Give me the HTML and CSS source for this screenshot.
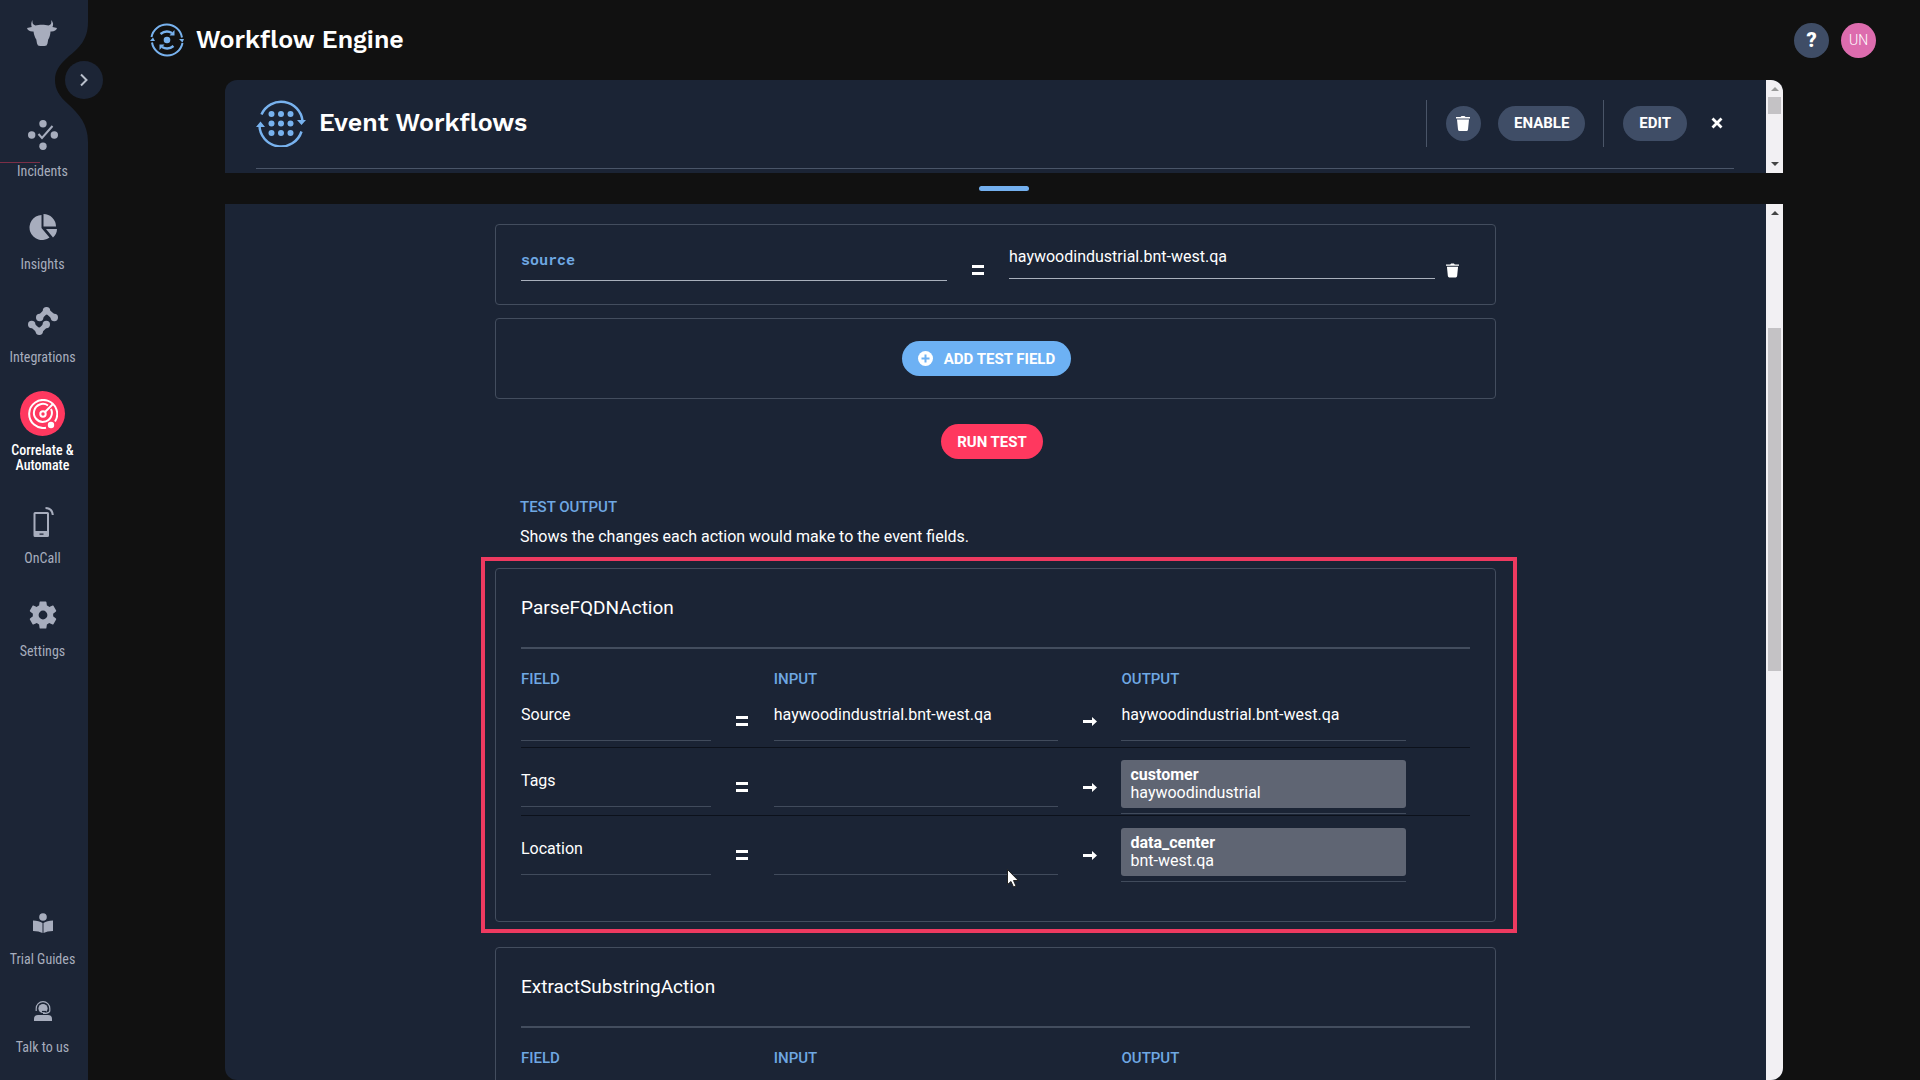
FILE: index.html
```html
<!DOCTYPE html>
<html lang="en">
<head>
<meta charset="utf-8">
<title>Workflow Engine</title>
<link rel="stylesheet" href="styles.css">
</head>
<body>
<div class="app">
  <nav class="sidebar" aria-label="Main">
    <svg class="sidebar-notch" width="33" height="120" viewBox="0 0 33 120" aria-hidden="true"><path fill="#111" d="M33 0C33 18 24 26 13 35C4 43 0 49 0 58C0 67 4 74 13 82C24 92 33 102 33 120Z"/></svg>
    <button class="expand" type="button" aria-label="Expand menu"><svg width="8" height="14" viewBox="0 0 8 14"><path d="M1 1.500l5.500 5.500L1 12.500" fill="none" stroke="#b9c0cc" stroke-width="2"/></svg></button>
    <svg class="logo" width="30" height="26" viewBox="0 0 30 26" aria-hidden="true"><path fill="#a7adbd" d="M5.500 0C5 3 6 5 8.500 5.500C12 4.500 18 4.500 21.500 5.500C24 5 25 3 24 0C26.500 2 26.500 5 25.500 7L30 8C29.500 10.500 26.500 12 23.500 11.500C23.300 15 22.500 17.500 21.200 19.500L20.500 23.500Q20 26 17.500 26H13Q10.500 26 10 23.500L9.300 19.500C8 17.500 7 15 6.500 11.500C3.500 12 .5 10.500 0 8L4.700 7C4 5 4 2 5.500 0Z"/></svg>
    <ul class="nav-list">
      <li><a class="nav-item" href="#incidents"><span class="nav-icon"><svg width="30" height="30" viewBox="0 0 30 30"><g fill="#a7adbd"><circle cx="15" cy="3.700" r="3.700"/><circle cx="15" cy="26.300" r="3.700"/><circle cx="3.700" cy="15" r="3.700"/><circle cx="26.300" cy="15" r="3.700"/></g><path d="M10.500 14l3.500 4L24.500 6" fill="none" stroke="#a7adbd" stroke-width="2"/></svg></span><span>Incidents</span></a></li>
      <li><a class="nav-item" href="#insights"><span class="nav-icon"><svg width="28" height="27" viewBox="0 0 28 27"><path fill="#a7adbd" d="M12.500 1V14L20.500 23.500A12.500 12.500 0 1 1 12.500 1ZM14.500 0A12.500 12.500 0 0 1 27 12.500H14.500ZM17 15H28C28 18.500 26.500 21.500 24 23.500Z"/></svg></span><span>Insights</span></a></li>
      <li><a class="nav-item" href="#integrations"><span class="nav-icon"><svg width="30" height="28" viewBox="0 0 30 28"><path d="M3.700 17.500L11.300 24.500L18.300 17.500M11.700 10.500L18.500 3.700L26.300 10.500" fill="none" stroke="#a7adbd" stroke-width="5"/><g fill="#a7adbd"><circle cx="3.700" cy="17.500" r="3.700"/><circle cx="11.300" cy="24.300" r="3.700"/><circle cx="18.300" cy="17.500" r="3.700"/><circle cx="11.700" cy="10.500" r="3.700"/><circle cx="18.500" cy="3.700" r="3.700"/><circle cx="26.300" cy="10.500" r="3.700"/></g></svg></span><span>Integrations</span></a></li>
      <li><a class="nav-item nav-item-active" href="#correlate" aria-current="page"><span class="nav-icon"><svg width="30" height="30" viewBox="0 0 30 30"><g fill="none" stroke="#fff" stroke-width="2"><path d="M18 28.700A14 14 0 1 1 27 22.500"/><path d="M20 6.500A9 9 0 1 0 23 10"/><circle cx="15" cy="15" r="2.700"/><path d="M17 13l8-8"/></g><circle cx="23" cy="26" r="3.200" fill="#fff"/></svg></span><span>Correlate &amp;<br>Automate</span></a></li>
      <li><a class="nav-item" href="#oncall"><span class="nav-icon"><svg width="26" height="30" viewBox="0 0 26 30"><path fill="#a7adbd" fill-rule="evenodd" d="M5 5H17.500Q19 5 19 6.500V28.500Q19 30 17.500 30H5Q3.500 30 3.500 28.500V6.500Q3.500 5 5 5ZM5.500 7V24H17V7ZM9.500 26.500V27.800H13.500V26.500Z"/><path d="M15.500 1Q22 1 22.800 8" fill="none" stroke="#a7adbd" stroke-width="2"/></svg></span><span>OnCall</span></a></li>
      <li><a class="nav-item" href="#settings"><span class="nav-icon"><svg width="34" height="34" viewBox="0 0 24 24"><path fill="#a7adbd" d="M19.140 12.940c.04-.3.060-.610.060-.940 0-.320-.020-.640-.070-.940l2.030-1.580c.180-.140.230-.410.120-.610l-1.920-3.320c-.120-.220-.370-.290-.590-.220l-2.390.960c-.5-.380-1.030-.7-1.620-.940l-.360-2.540c-.040-.240-.240-.410-.480-.410h-3.840c-.240 0-.430.170-.470.410l-.360 2.540c-.590.240-1.130.570-1.620.940l-2.390-.960c-.220-.080-.470 0-.590.220L2.740 8.870c-.120.210-.080.470.120.610l2.030 1.580c-.050.3-.090.630-.090.940s.020.640.070.940l-2.030 1.580c-.180.140-.230.410-.120.610l1.920 3.320c.120.220.370.290.590.220l2.390-.960c.5.380 1.030.7 1.620.940l.36 2.540c.050.240.240.410.480.410h3.840c.240 0 .440-.170.470-.410l.36-2.540c.590-.240 1.130-.560 1.620-.940l2.390.960c.220.080.470 0 .590-.220l1.920-3.320c.120-.220.070-.470-.120-.610l-2.010-1.580zM12 15.100A3.100 3.100 0 1 1 12 8.900a3.100 3.100 0 0 1 0 6.200z"/></svg></span><span>Settings</span></a></li>
    </ul>
    <ul class="nav-list nav-list-bottom">
      <li><a class="nav-item" href="#guides"><span class="nav-icon"><svg width="20" height="20" viewBox="0 0 20 20"><g fill="#a7adbd"><circle cx="10" cy="4" r="3.800"/><path d="M0 7.500Q6 7.500 9.500 10V20Q6 18 0 18ZM20 7.500Q14 7.500 10.500 10V20Q14 18 20 18Z"/></g></svg></span><span>Trial Guides</span></a></li>
      <li><a class="nav-item" href="#talk"><span class="nav-icon"><svg width="18" height="20" viewBox="0 0 18 20"><path fill="#a7adbd" d="M0 20V18Q0 14 4 14H14Q18 14 18 18V20Z"/><circle cx="9" cy="7.500" r="4.600" fill="#a7adbd"/><path d="M2.200 10V7.500A6.800 6.800 0 0 1 15.800 7.500V10Q15 12.500 9 12.500" fill="none" stroke="#a7adbd" stroke-width="1.200"/><path d="M8 10.500h4" stroke="#1c2536" stroke-width="1.200"/></svg></span><span>Talk to us</span></a></li>
    </ul>
    <span class="marker" aria-hidden="true"></span>
  </nav>

  <main class="main">
    <header class="topbar">
      <svg width="34" height="34" viewBox="0 0 34 34" aria-hidden="true"><g fill="none" stroke="#78b2ee" stroke-width="2"><path d="M1.500 14A15.500 15.500 0 0 1 32 14.500"/><path d="M32.500 20A15.500 15.500 0 0 1 2 19.500"/><path d="M10.500 11Q16 6.500 22 10" stroke-width="2.500"/><path d="M23.500 23Q18 27.500 12 24" stroke-width="2.500"/></g><g fill="#78b2ee"><circle cx="17" cy="17" r="3.300"/><path d="M29 16h5l-1.500 3.500ZM0 18h5L3 14.500ZM24.500 7v5.500h-5ZM9.500 27v-5.500h5Z"/></g></svg>
      <h1 class="title">Workflow Engine</h1>
      <button class="round-btn" type="button" aria-label="Help">?</button>
      <button class="round-btn avatar" type="button">UN</button>
    </header>

    <div class="panels">
      <section class="panel panel-head">
        <div class="head-body">
          <div class="head-row">
            <svg width="50" height="48" viewBox="0 0 50 48" aria-hidden="true"><g fill="none" stroke="#78b2ee" stroke-width="2.500"><path d="M5.500 15.500A21.500 21.500 0 0 1 46.500 22"/><path d="M3.500 26A21.500 21.500 0 0 0 45.500 32.500"/></g><g fill="#78b2ee"><path d="M41 21h9L45.500 26ZM0 28h9L4.500 22.500Z"/><circle cx="15.500" cy="15" r="3"/><circle cx="25" cy="15" r="3"/><circle cx="34.500" cy="15" r="3"/><circle cx="15.500" cy="24.500" r="3"/><circle cx="25" cy="24.500" r="3"/><circle cx="34.500" cy="24.500" r="3"/><circle cx="15.500" cy="34" r="3"/><circle cx="25" cy="34" r="3"/><circle cx="34.500" cy="34" r="3"/></g></svg>
            <h2 class="title">Event Workflows</h2>
            <div class="actions">
              <button class="round-btn" type="button" aria-label="Delete workflow"><svg width="14" height="15" viewBox="0 0 14 15"><path fill="#fff" d="M0 1H4.500L5.500 0H8.500L9.500 1H14V2.500H0ZM1 3.500H13L12 13.500Q11.800 15 10.500 15H3.500Q2.200 15 2 13.500Z"/></svg></button>
              <button class="pill" type="button">ENABLE</button>
            </div>
            <div class="actions">
              <button class="pill" type="button">EDIT</button>
              <button class="close" type="button" aria-label="Close"><svg width="12" height="12" viewBox="0 0 12 12"><path d="M1.500 1.500l9 9M10.500 1.500l-9 9" stroke="#fff" stroke-width="2.800"/></svg></button>
            </div>
          </div>
        </div>
        <div class="scrollbar" aria-hidden="true"><span class="arrow-up arrow-off"></span><span class="thumb thumb-short"></span><span class="arrow-down"></span></div>
      </section>

      <div class="splitter"><span></span></div>

      <section class="panel panel-body">
        <div class="scroll-area">
          <div class="content">
            <div class="card field-card">
              <input class="line-input field-name" type="text" value="source" aria-label="Field name">
              <svg class="equals" width="12" height="10" viewBox="0 0 12 10" aria-label="equals"><path fill="#fff" d="M0 0h12v3H0zM0 7h12v3H0z"/></svg>
              <input class="line-input field-value" type="text" value="haywoodindustrial.bnt-west.qa" aria-label="Field value">
              <button class="icon-btn" type="button" aria-label="Delete field"><svg width="13" height="15" viewBox="0 0 14 15"><path fill="#fff" d="M0 1H4.500L5.500 0H8.500L9.500 1H14V2.500H0ZM1 3.500H13L12 13.500Q11.800 15 10.500 15H3.500Q2.200 15 2 13.500Z"/></svg></button>
            </div>
            <div class="card add-card">
              <button class="pill pill-blue" type="button"><svg width="15" height="15" viewBox="0 0 15 15"><circle cx="7.500" cy="7.500" r="7.500" fill="#fff"/><path d="M7.500 3.500v8M3.500 7.500h8" stroke="#6db1f4" stroke-width="2"/></svg>ADD TEST FIELD</button>
            </div>
            <div class="run-row"><button class="pill pill-red" type="button">RUN TEST</button></div>
            <div class="intro">
              <h3 class="label">TEST OUTPUT</h3>
              <p>Shows the changes each action would make to the event fields.</p>
            </div>

            <section class="card result-card framed">
              <h3 class="result-title">ParseFQDNAction</h3>
              <table class="result">
                <colgroup><col class="c-field"><col class="c-op"><col class="c-value"><col class="c-op"><col class="c-value"><col></colgroup>
                <thead><tr><th class="label">FIELD</th><th></th><th class="label">INPUT</th><th></th><th class="label">OUTPUT</th><th></th></tr></thead>
                <tbody>
                  <tr><td><div class="line">Source</div></td><td class="op"><svg width="12" height="10" viewBox="0 0 12 10"><path fill="#fff" d="M0 0h12v3H0zM0 7h12v3H0z"/></svg></td><td><div class="line">haywoodindustrial.bnt-west.qa</div></td><td class="op"><svg width="14" height="10" viewBox="0 0 14 10"><path fill="#fff" d="M0 4h9V1l5 4.500-5 4.500V7H0z"/></svg></td><td><div class="line">haywoodindustrial.bnt-west.qa</div></td><td></td></tr>
                  <tr><td><div class="line">Tags</div></td><td class="op"><svg width="12" height="10" viewBox="0 0 12 10"><path fill="#fff" d="M0 0h12v3H0zM0 7h12v3H0z"/></svg></td><td><div class="line"></div></td><td class="op"><svg width="14" height="10" viewBox="0 0 14 10"><path fill="#fff" d="M0 4h9V1l5 4.500-5 4.500V7H0z"/></svg></td><td><div class="chip-line"><div class="chip"><b>customer</b><br>haywoodindustrial</div></div></td><td></td></tr>
                  <tr><td><div class="line">Location</div></td><td class="op"><svg width="12" height="10" viewBox="0 0 12 10"><path fill="#fff" d="M0 0h12v3H0zM0 7h12v3H0z"/></svg></td><td><div class="line"></div></td><td class="op"><svg width="14" height="10" viewBox="0 0 14 10"><path fill="#fff" d="M0 4h9V1l5 4.500-5 4.500V7H0z"/></svg></td><td><div class="chip-line"><div class="chip"><b>data_center</b><br>bnt-west.qa</div></div></td><td></td></tr>
                </tbody>
              </table>
              <svg class="cursor" width="12" height="19" viewBox="0 0 12 19" aria-hidden="true"><path fill="#fff" stroke="#222" stroke-width="1" d="M.5.5V15.500L4 12.500L6.500 18L9 17L6.500 11.500H11.300Z"/></svg>
            </section>

            <section class="card result-card">
              <h3 class="result-title">ExtractSubstringAction</h3>
              <table class="result">
                <colgroup><col class="c-field"><col class="c-op"><col class="c-value"><col class="c-op"><col class="c-value"><col></colgroup>
                <thead><tr><th class="label">FIELD</th><th></th><th class="label">INPUT</th><th></th><th class="label">OUTPUT</th><th></th></tr></thead>
              </table>
            </section>
          </div>
        </div>
        <div class="scrollbar" aria-hidden="true"><span class="arrow-up"></span><span class="thumb thumb-long"></span></div>
      </section>
    </div>
  </main>
</div>
</body>
</html>
```
FILE: styles.css
```css
* { box-sizing: border-box; }

body {
  margin: 0;
  background: #111;
  color: #fff;
  font-family: Roboto, "Liberation Sans", sans-serif;
  font-size: 16px;
  font-weight: 400;
  line-height: 20px;
}

h1, h2, h3, p, ul { margin: 0; padding: 0; }
ul { list-style: none; }
svg { display: block; flex: none; }
button { border: 0; padding: 0; color: inherit; font: inherit; background: none; cursor: pointer; }

.app { display: flex; height: 100vh; overflow: hidden; }

/* Sidebar */
.sidebar {
  position: relative;
  z-index: 1;
  display: flex;
  flex: none;
  flex-direction: column;
  width: 88px;
  padding: 20px 0 25px;
  background: #1c2536;
}
.sidebar-notch { position: absolute; top: 22px; right: 0; }
.expand {
  position: absolute;
  top: 61px;
  right: -15px;
  display: grid;
  place-items: center;
  width: 38px;
  height: 38px;
  border-radius: 50%;
  background: #1c2536;
}
.logo { margin: 0 0 66px 27px; }
.nav-list { display: flex; flex-direction: column; gap: 27px; width: 85px; }
.nav-list-bottom { gap: 21px; margin-top: auto; }
.nav-item {
  display: flex;
  flex-direction: column;
  align-items: center;
  gap: 7px;
  color: #a7adbd;
  font-family: "Roboto Condensed", "Liberation Sans Narrow", Roboto, sans-serif;
  font-size: 14px;
  line-height: 15px;
  text-align: center;
  text-decoration: none;
}
.nav-list:not(.nav-list-bottom) { gap: 26px; }
.nav-icon { display: grid; place-items: center; width: 45px; height: 45px; border-radius: 50%; }
.nav-item-active { color: #fff; font-weight: 500; }
.nav-item-active .nav-icon { background: #ff385f; }
.marker { position: absolute; top: 162px; left: 0; width: 40px; height: 1px; background: #7c2f47; }

/* Top bar */
.main { display: flex; flex: 1; flex-direction: column; min-width: 0; }
.topbar { display: flex; align-items: center; height: 80px; padding: 0 44px 0 62px; }
.topbar .title { margin: 0 auto 0 12px; }
.title { font-family: "Work Sans", "Open Sans", sans-serif; font-size: 25px; font-weight: 600; line-height: 32px; }
.round-btn {
  display: grid;
  place-items: center;
  width: 35px;
  height: 35px;
  border-radius: 50%;
  background: #3f4d66;
  font-size: 20px;
  font-weight: 900;
}
.avatar { margin-left: 12px; background: #dd6cae; font-size: 14px; font-weight: 300; }

/* Panels */
.panels { display: flex; flex: 1; flex-direction: column; min-height: 0; padding: 0 137px; }
.panel { display: flex; overflow: hidden; background: #1b2435; }
.panel-head { flex: none; height: 93px; border-radius: 12px 12px 0 0; }
.head-body { flex: 1; padding: 0 32px 4px 31px; }
.head-row { display: flex; align-items: center; height: 89px; padding-bottom: 2px; border-bottom: 1px solid #4a5568; }
.head-row .title { margin: 0 auto 0 13px; }
.actions { display: flex; align-items: center; gap: 17px; height: 47px; padding: 0 18px 0 19px; border-left: 1px solid #4a5568; }
.actions:last-child { gap: 24px; padding-right: 11px; }
.pill {
  display: inline-flex;
  align-items: center;
  gap: 11px;
  height: 35px;
  padding: 0 16px;
  border-radius: 18px;
  background: #3f4d66;
  font-size: 15px;
  font-weight: 700;
}
.pill-blue { background: #6db1f4; }
.pill-red { background: #ff385f; }
.splitter { display: grid; flex: none; place-items: center; height: 31px; }
.splitter span { width: 50px; height: 5px; border-radius: 3px; background: #73afee; }
.panel-body { flex: 1; min-height: 0; border-radius: 0 0 12px 12px; }
.scroll-area { flex: 1; overflow: auto; scrollbar-width: none; }
.content { width: 100%; max-width: 1001px; margin: 0 auto; padding: 20px 0; }

/* Scroll bars */
.scrollbar { display: flex; flex: none; flex-direction: column; align-items: center; width: 17px; padding: 7px 0; background: #f2f0f3; }
.arrow-up, .arrow-down { width: 0; height: 0; border: solid transparent; border-width: 0 4px 4px; border-bottom-color: #444; }
.arrow-off { border-bottom-color: #999; }
.arrow-down { margin-top: auto; border-width: 4px 4px 0; border-top-color: #444; }
.thumb { width: 13px; background: #c4c2c5; }
.thumb-short { height: 17px; margin-top: 6px; }
.thumb-long { height: 343px; margin-top: 113px; }

/* Test form */
.card { position: relative; border: 1px solid #434d5e; border-radius: 4px; }
.field-card {
  display: grid;
  grid-template-columns: 1fr 62px 1fr 35px;
  align-items: start;
  height: 81px;
  padding: 20px 25px 0;
}
.line-input {
  width: 100%;
  height: 34px;
  padding: 0 0 10px;
  border: 0;
  border-bottom: 1px solid #a9b0bc;
  outline: 0;
  background: none;
  color: #fff;
  font: inherit;
}
.field-name { height: 36px; padding-bottom: 8px; color: #6fa8e3; font-family: "Roboto Mono", "Liberation Mono", monospace; font-size: 15px; font-weight: 700; }
.equals { margin: 20px 0 0 25px; }
.icon-btn { margin: 18px 0 0 11px; }
.add-card { display: flex; align-items: center; justify-content: center; height: 81px; margin-top: 13px; padding-right: 18px; }
.run-row { display: flex; justify-content: center; padding: 25px 7px 0 0; }
.intro { padding: 38px 25px 21px; }
.intro p { margin-top: 10px; }
.label { color: #6fa8e3; font-size: 15px; font-weight: 500; line-height: 20px; text-align: left; }

/* Test results */
.result-card { min-height: 354px; margin-bottom: 25px; padding: 0 25px; }
.result-title { padding: 26px 0 27px; border-bottom: 2px solid #434d5e; font-size: 19px; font-weight: 400; line-height: 25px; }
.result { width: 100%; border-collapse: collapse; table-layout: fixed; }
.c-field { width: 20%; }
.c-op { width: 63px; }
.c-value { width: 30%; }
.result th { padding: 20px 0 0; }
.result td { padding: 12px 0 0; vertical-align: top; }
.result tbody tr { height: 68px; border-bottom: 1px solid #0c111b; }
.result tbody tr:first-child { height: 58px; }
.result tbody tr:first-child td { padding-top: 5px; }
.result tbody tr:last-child { border-bottom: 0; }
.line { height: 47px; padding-top: 11px; border-bottom: 1px solid #414b5c; }
.op svg { margin: 22px auto 0; }
.chip-line { padding-bottom: 5px; border-bottom: 1px solid #414b5c; }
.chip { height: 48px; padding: 6px 9px; border-radius: 3px; background: #5f6573; line-height: 18px; }
.framed::after { content: ""; position: absolute; inset: -12px -22px -12px -15px; border: 4px solid #ee3a60; pointer-events: none; }
.cursor { position: absolute; top: 300px; left: 511px; }
```
